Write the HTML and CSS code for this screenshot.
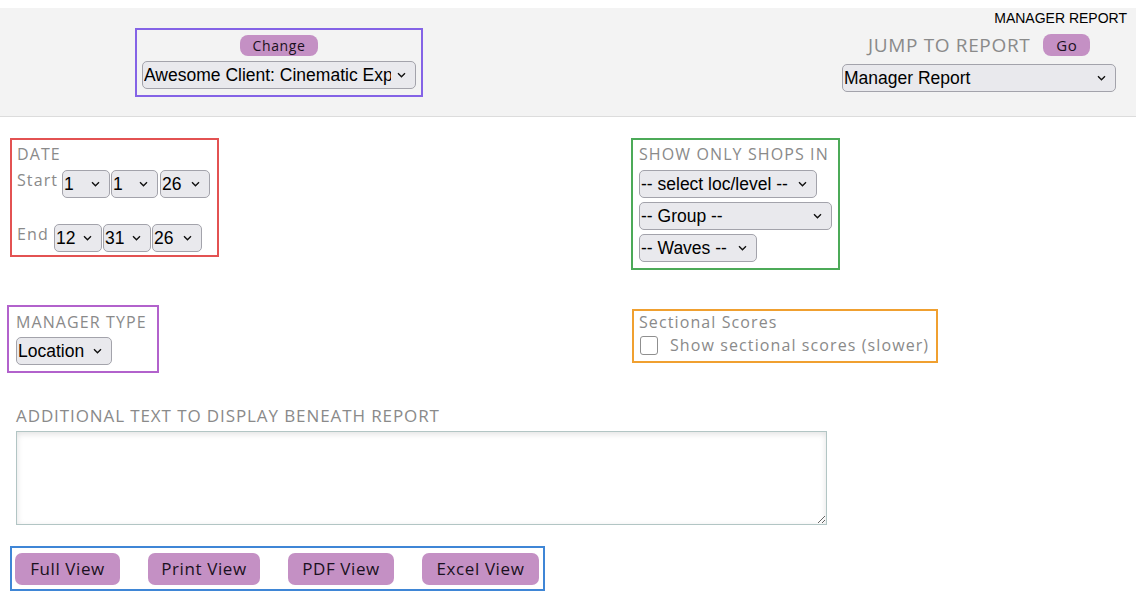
FILE: index.html
```html
<!DOCTYPE html>
<html>
<head>
<meta charset="utf-8">
<link rel="stylesheet" href="styles.css">
</head>
<body>
<header class="top">
  <div class="client-box">
    <button class="pill change">Change</button>
    <select class="sel client-sel"><option>Awesome Client: Cinematic Experiences</option></select>
  </div>
  <div class="jump">
    <div class="report-name">MANAGER REPORT</div>
    <div class="jump-inner">
      <div class="jump-row"><span class="jump-label">JUMP TO REPORT</span><button class="pill go">Go</button></div>
      <select class="sel report-sel"><option>Manager Report</option></select>
    </div>
  </div>
</header>
<main class="content">
  <div class="row row1">
    <div class="box date-box">
      <div class="label">DATE</div>
      <div class="date-line start-line">
        <span class="dlabel">Start</span>
        <select class="sel s-a"><option>1</option></select><select class="sel s-b"><option>1</option></select><select class="sel s-yr"><option>26</option></select>
      </div>
      <div class="date-line end-line">
        <span class="dlabel">End</span>
        <select class="sel s-a"><option>12</option></select><select class="sel s-a"><option>31</option></select><select class="sel s-yr"><option>26</option></select>
      </div>
    </div>
    <div class="box shops-box">
      <div class="label">SHOW ONLY SHOPS IN</div>
      <select class="sel loc-sel"><option>-- select loc/level --</option></select>
      <select class="sel group-sel"><option>-- Group --</option></select>
      <select class="sel waves-sel"><option>-- Waves --</option></select>
    </div>
  </div>
  <div class="row row2">
    <div class="box type-box">
      <div class="label">MANAGER TYPE</div>
      <select class="sel type-sel"><option>Location</option></select>
    </div>
    <div class="box sect-box">
      <div class="label">Sectional Scores</div>
      <label class="chk"><span class="cbox"></span><span>Show sectional scores (slower)</span></label>
    </div>
  </div>
  <div class="additional">
    <div class="label">ADDITIONAL TEXT TO DISPLAY BENEATH REPORT</div>
    <textarea class="notes"></textarea>
  </div>
  <div class="box views">
    <button class="pill view">Full View</button>
    <button class="pill view">Print View</button>
    <button class="pill view">PDF View</button>
    <button class="pill view">Excel View</button>
  </div>
</main>
</body>
</html>
```
FILE: styles.css
```css
html, body { margin: 0; padding: 0; background: #fff; }
body { padding-top: 8px; font-family: "Open Sans", "Liberation Sans", sans-serif; }

.top {
  background: #f3f3f3;
  border-bottom: 1px solid #dcdcdc;
  display: flex;
  justify-content: space-between;
  box-sizing: border-box;
  height: 109px;
}
.client-box {
  margin: 20px 0 0 135px;
  width: 288px;
  height: 69px;
  box-sizing: border-box;
  border: 2px solid #8463e6;
  display: flex;
  flex-direction: column;
  align-items: center;
  padding-top: 5px;
}
.pill {
  background: #c490c4;
  border: none;
  color: #1a1020;
  font-family: "Open Sans", "Liberation Sans", sans-serif;
  letter-spacing: 0.6px;
  padding: 0;
  cursor: pointer;
}
.change { width: 78px; height: 21px; border-radius: 8px; font-size: 14px; line-height: 21px; }
.sel {
  -webkit-appearance: none;
  appearance: none;
  font-family: "Liberation Sans", Arial, sans-serif;
  font-size: 17.5px;
  color: #000;
  background-color: #e9e9ed;
  background-image: url("data:image/svg+xml,%3Csvg xmlns='http://www.w3.org/2000/svg' width='9' height='6' viewBox='0 0 9 6'%3E%3Cpath d='M1 1.2l3.5 3.5 3.5-3.5' fill='none' stroke='%23111' stroke-width='1.4'/%3E%3C/svg%3E");
  background-repeat: no-repeat;
  background-position: right 9px center;
  border: 1px solid #a3a3ab;
  border-radius: 5px;
  height: 28px;
  padding: 0 20px 0 1px;
  margin: 0;
  box-sizing: border-box;
  overflow: hidden;
  white-space: nowrap;
}
.client-sel { width: 274px; margin-top: 5px; padding-right: 24px; }

.jump {
  display: flex;
  flex-direction: column;
  align-items: flex-end;
  padding-right: 9px;
}
.report-name { font-family: "Liberation Sans", Arial, sans-serif; font-size: 14px; color: #000; margin-top: 3px; line-height: 15px; }
.jump-inner { margin-right: 11px; width: 274px; display: flex; flex-direction: column; margin-top: 6px; }
.jump-row { display: flex; align-items: center; padding-left: 26px; }
.jump-label { font-size: 19px; color: #8a8a8a; line-height: 26px; letter-spacing: 0.65px; }
.go { width: 47px; height: 22px; border-radius: 8px; font-size: 15px; margin-left: 13px; line-height: 22px; }
.report-sel { width: 274px; margin-top: 6px; }

.row { display: grid; }
.row1 { grid-template-columns: 621px auto; padding-left: 10px; margin-top: 21px; align-items: start; }
.box { box-sizing: border-box; }
.label { color: #8a8a8a; font-size: 16px; line-height: 20px; letter-spacing: 1.1px; }

.date-box { width: 209px; height: 119px; border: 2px solid #e35252; padding: 4px 0 0 5px; }
.date-line { display: flex; align-items: flex-start; }
.dlabel { color: #8a8a8a; font-size: 16px; line-height: 20px; letter-spacing: 1.1px; }
.start-line { margin-top: 6px; }
.start-line .dlabel { width: 45px; margin-top: 0; }
.end-line { margin-top: 26px; }
.end-line .dlabel { width: 37px; margin-top: 0; }
.s-a { width: 48px; margin-right: 1px !important; }
.s-b { width: 47px; margin-right: 2px !important; }
.s-yr { width: 50px; }

.shops-box { width: 209px; height: 132px; border: 2px solid #4caa58; padding: 4px 0 0 6px; display: flex; flex-direction: column; align-items: flex-start; gap: 4px; }
.shops-box .label { margin-bottom: 2px; }
.loc-sel { width: 178px; }
.group-sel { width: 193px; }
.waves-sel { width: 118px; }

.row2 { grid-template-columns: 625px auto; padding-left: 7px; margin-top: 35px; align-items: start; }
.type-box { width: 152px; height: 68px; border: 2px solid #b262cc; padding: 5px 0 0 7px; }
.type-sel { width: 96px; margin-top: 5px; }
.sect-box { width: 306px; height: 54px; border: 2px solid #f0a030; padding: 1px 0 0 5px; margin-top: 4px; }
.chk { display: flex; align-items: center; color: #8a8a8a; font-size: 16px; line-height: 20px; letter-spacing: 1.1px; margin-top: 2px; }
.cbox { width: 18px; height: 19px; border: 1px solid #8f8f8f; border-radius: 3px; background: #fff; margin: 2px 12px 0 1px; box-sizing: border-box; }

.additional { padding-left: 16px; margin-top: 32px; }
.additional .label { font-size: 17px; line-height: 22px; letter-spacing: 0.9px; }
.notes {
  display: block;
  width: 811px;
  height: 94px;
  margin-top: 4px;
  box-sizing: border-box;
  border: 1px solid #b2c5c4;
  box-shadow: inset 0 2px 6px rgba(0,0,0,0.12);
  border-radius: 0;
  resize: both;
  font-family: "Open Sans", sans-serif;
}
.views {
  margin: 21px 0 0 10px;
  width: 535px;
  height: 45px;
  border: 2px solid #3f86d6;
  display: flex;
  align-items: center;
  padding-left: 3px;
}
.view { height: 32px; border-radius: 7px; font-size: 17px; line-height: 32px; margin-right: 28px; }
.view:nth-child(1) { width: 105px; }
.view:nth-child(2) { width: 112px; }
.view:nth-child(3) { width: 106px; }
.view:nth-child(4) { width: 117px; margin-right: 0; }
```
